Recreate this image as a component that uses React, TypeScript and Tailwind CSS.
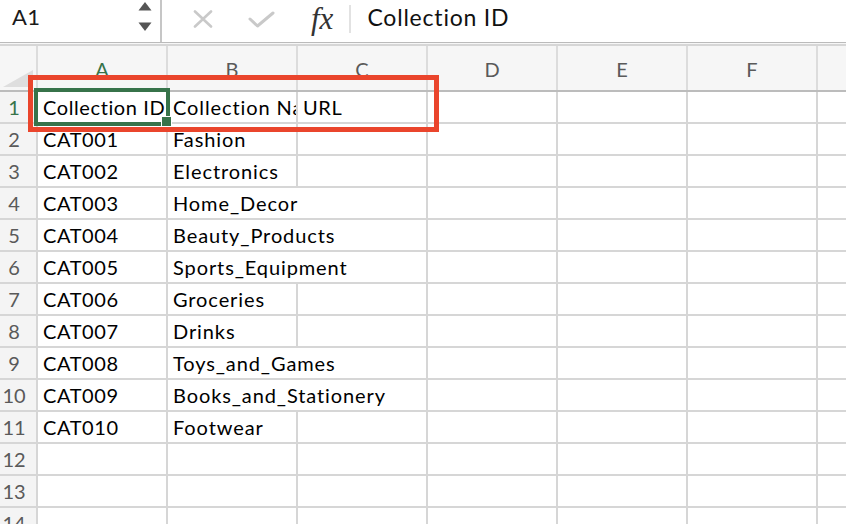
import React from 'react';

type Row = { id: string; name: string; url?: string; wide?: boolean };

const rows: Row[] = [
  { id: 'Collection ID', name: 'Collection Name', url: 'URL' },
  { id: 'CAT001', name: 'Fashion' },
  { id: 'CAT002', name: 'Electronics' },
  { id: 'CAT003', name: 'Home_Decor', wide: true },
  { id: 'CAT004', name: 'Beauty_Products', wide: true },
  { id: 'CAT005', name: 'Sports_Equipment', wide: true },
  { id: 'CAT006', name: 'Groceries' },
  { id: 'CAT007', name: 'Drinks' },
  { id: 'CAT008', name: 'Toys_and_Games', wide: true },
  { id: 'CAT009', name: 'Books_and_Stationery', wide: true },
  { id: 'CAT010', name: 'Footwear' },
  { id: '', name: '' },
  { id: '', name: '' },
  { id: '', name: '' },
];

const columns = ['A', 'B', 'C', 'D', 'E', 'F', ''];

const cell =
  'bg-white h-[30px] flex items-center px-[5px] whitespace-nowrap overflow-hidden text-[20px] leading-[24px] tracking-[0.6px] text-black';
// column B text runs a little wider in the original
const nameCell =
  'bg-white h-[30px] flex items-center px-[5px] whitespace-nowrap overflow-hidden text-[20px] leading-[24px] tracking-[0.9px] text-black';

const FormulaBar = () => (
  <div className="flex h-[42px] items-center bg-white pb-[8px]">
    {/* name box */}
    <div className="flex h-full w-[160px] items-center">
      <span className="pl-[12px] text-[22px] leading-none tracking-[0.4px] text-[#1a1a1a]">A1</span>
      <div className="ml-auto mr-[8px] flex flex-col gap-[11px] self-start pt-[1px]">
        <svg width="14" height="10" viewBox="0 0 14 10">
          <path d="M7 1 L13.5 9.5 L0.5 9.5 Z" fill="#555" />
        </svg>
        <svg width="14" height="10" viewBox="0 0 14 10">
          <path d="M0.5 0.5 L13.5 0.5 L7 9 Z" fill="#555" />
        </svg>
      </div>
    </div>
    <div className="mb-[-8px] h-[42px] w-[2px] bg-[#c6c6c6]" />

    {/* cancel / enter / fx */}
    <svg className="ml-[31px] mt-[4px]" width="20" height="18" viewBox="0 0 20 18">
      <path d="M2 1.5 L18 16.5 M18 1.5 L2 16.5" stroke="#c9c9c9" strokeWidth="2.6" strokeLinecap="round" />
    </svg>
    <svg className="ml-[35px] mt-[5px]" width="27" height="17" viewBox="0 0 27 17">
      <path d="M2 8 L9.5 15 L25 2" stroke="#c9c9c9" strokeWidth="3" fill="none" strokeLinecap="round" strokeLinejoin="round" />
    </svg>
    <span className="ml-[36px] mt-[2px] font-['Liberation_Serif'] text-[31px] italic leading-none text-[#333]">fx</span>
    <div className="ml-[16px] mt-[4px] h-[28px] w-[2px] bg-[#e2e2e2]" />
    <span className="ml-[16px] text-[23px] leading-none tracking-[0.8px] text-[#111]">Collection ID</span>
  </div>
);

const Header = () => (
  <div className="grid grid-cols-[36px_repeat(7,128px)] gap-x-[2px] bg-[#dcdcdc]">
    <div className="relative h-[44px] bg-[#f6f6f6]">
      <svg className="absolute bottom-[3px] right-[3px]" width="30" height="17" viewBox="0 0 30 17">
        <path d="M30 0 L30 17 L0 17 Z" fill="#dedede" />
      </svg>
    </div>
    {columns.map((c, i) => (
      <div
        key={i}
        className={`flex h-[44px] items-center justify-center bg-[#f6f6f6] pt-[2px] text-[20px] ${
          c === 'A' ? 'text-[#37734a]' : 'text-[#5a5a5a]'
        }`}
      >
        {c}
      </div>
    ))}
  </div>
);

export default function App() {
  return (
    <div className="relative h-[524px] w-[846px] overflow-hidden bg-white font-['Lato',sans-serif]">
      <FormulaBar />
      <div className="h-[1px] bg-[#bbbbbb]" />
      <div className="h-[1px] bg-[#f6f6f6]" />
      <div className="h-[2px] bg-[#d6d6d6]" />

      <Header />
      <div className="h-[2px] bg-[#bcbcbc]" />

      <div className="grid grid-cols-[36px_repeat(7,128px)] gap-[2px] bg-[#d6d6d6]">
        {rows.map((r, i) => (
          <React.Fragment key={i}>
            <div
              className={`flex h-[30px] items-center justify-center bg-[#f4f4f4] pr-[8px] text-[20px] ${
                i === 0 ? 'text-[#37734a]' : 'text-[#5a5a5a]'
              }`}
            >
              {i + 1}
            </div>
            <div className={cell}>{r.id}</div>
            {r.wide ? (
              <div className={`${nameCell} col-span-2`}>{r.name}</div>
            ) : (
              <>
                <div className={nameCell}>{r.name}</div>
                <div className={cell}>{r.url}</div>
              </>
            )}
            <div className={cell} />
            <div className={cell} />
            <div className={cell} />
            <div className={cell} />
          </React.Fragment>
        ))}
      </div>

      {/* selected cell A1 */}
      <div className="absolute left-[34px] top-[88px] h-[38px] w-[136px] border-[4px] border-[#37734a]" />
      <div className="absolute left-[161px] top-[116px] h-[11px] w-[11px] border border-white bg-[#37734a]" />

      {/* annotation box */}
      <div className="absolute left-[28px] top-[75px] h-[57px] w-[411px] border-[5px] border-[#ea452c]" />
    </div>
  );
}
